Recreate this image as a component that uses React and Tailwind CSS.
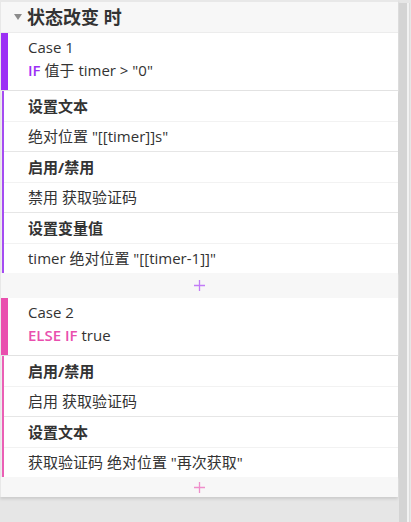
const FONT = { fontFamily: '"Open Sans", "Noto Sans CJK SC", sans-serif' };

function Case({ title, keyword, rest, bar, kw }) {
    return (
        <div className="flex h-[58px] bg-white border-b border-[#e4e4e4]">
            <div className={`w-[7px] ${bar}`} />
            <div className="pl-[20px] pt-[3px] text-[15px] leading-[23px] text-[#333]">
                <div>{title}</div>
                <div>
                    <span className={`font-semibold ${kw}`}>{keyword}</span> {rest}
                </div>
            </div>
        </div>
    );
}

function Actions({ items, border }) {
    return (
        <div className={`bg-white border-l-2 ${border} ml-[1px] shadow-[0_1px_2px_rgba(0,0,0,0.12)]`}>
            {items.map(([title, value], i) => (
                <div key={i} className={i > 0 ? "border-t border-[#e6e6e6]" : ""}>
                    <div className="h-[30px] flex items-center pl-[24px] text-[15px] font-bold text-[#333]">
                        {title}
                    </div>
                    <div className="h-[30px] flex items-center pl-[24px] text-[15px] text-[#333] border-t border-[#f2f2f2]">
                        {value}
                    </div>
                </div>
            ))}
        </div>
    );
}

function Plus({ h, color }) {
    return (
        <div className={`${h} flex items-center justify-center bg-[#f7f7f7]`}>
            <svg width="11" height="11" viewBox="0 0 11 11">
                <path d="M5.5 0 V11 M0 5.5 H11" stroke={color} strokeWidth="1.3" />
            </svg>
        </div>
    );
}

export default function App() {
    return (
        <div className="w-[411px] h-[522px] bg-[#e6e6e6] flex overflow-hidden" style={FONT}>
            <div className="w-[398px] flex flex-col">
                <div className="bg-[#f7f7f7] border-t-2 border-[#e2e2e2] border-l border-[#e8e8e8] shadow-[0_2px_3px_rgba(0,0,0,0.12)]">
                    <div className="h-[31px] flex items-center pl-[13px] border-b border-[#ececec]">
                        <svg width="8" height="6" viewBox="0 0 8 6" className="mr-[5px]">
                            <path d="M0 0 L8 0 L4 6 Z" fill="#8c8c8c" />
                        </svg>
                        <span className="text-[18px] font-bold text-[#333]">状态改变 时</span>
                    </div>
                    <Case title="Case 1" keyword="IF" rest={'值于 timer > "0"'} bar="bg-[#9c2ff5]" kw="text-[#9c2ff5]" />
                    <Actions
                        border="border-[#a54cf2]"
                        items={[
                            ["设置文本", '绝对位置 "[[timer]]s"'],
                            ["启用/禁用", "禁用 获取验证码"],
                            ["设置变量值", 'timer 绝对位置 "[[timer-1]]"'],
                        ]}
                    />
                    <Plus h="h-[25px]" color="#c27cf7" />
                    <Case title="Case 2" keyword="ELSE IF" rest="true" bar="bg-[#e94fae]" kw="text-[#e94fae]" />
                    <Actions
                        border="border-[#ea5fb5]"
                        items={[
                            ["启用/禁用", "启用 获取验证码"],
                            ["设置文本", '获取验证码 绝对位置 "再次获取"'],
                        ]}
                    />
                    <Plus h="h-[20px]" color="#ef8ecb" />
                </div>
            </div>
            <div className="w-[13px] flex pt-[3px]">
                <div className="w-[8px] ml-[1px] bg-[#d4d4d4]" />
                <div className="flex-1 bg-[#f2f2f2] border-r border-[#dcdcdc] mr-[1px]" />
            </div>
        </div>
    );
}
